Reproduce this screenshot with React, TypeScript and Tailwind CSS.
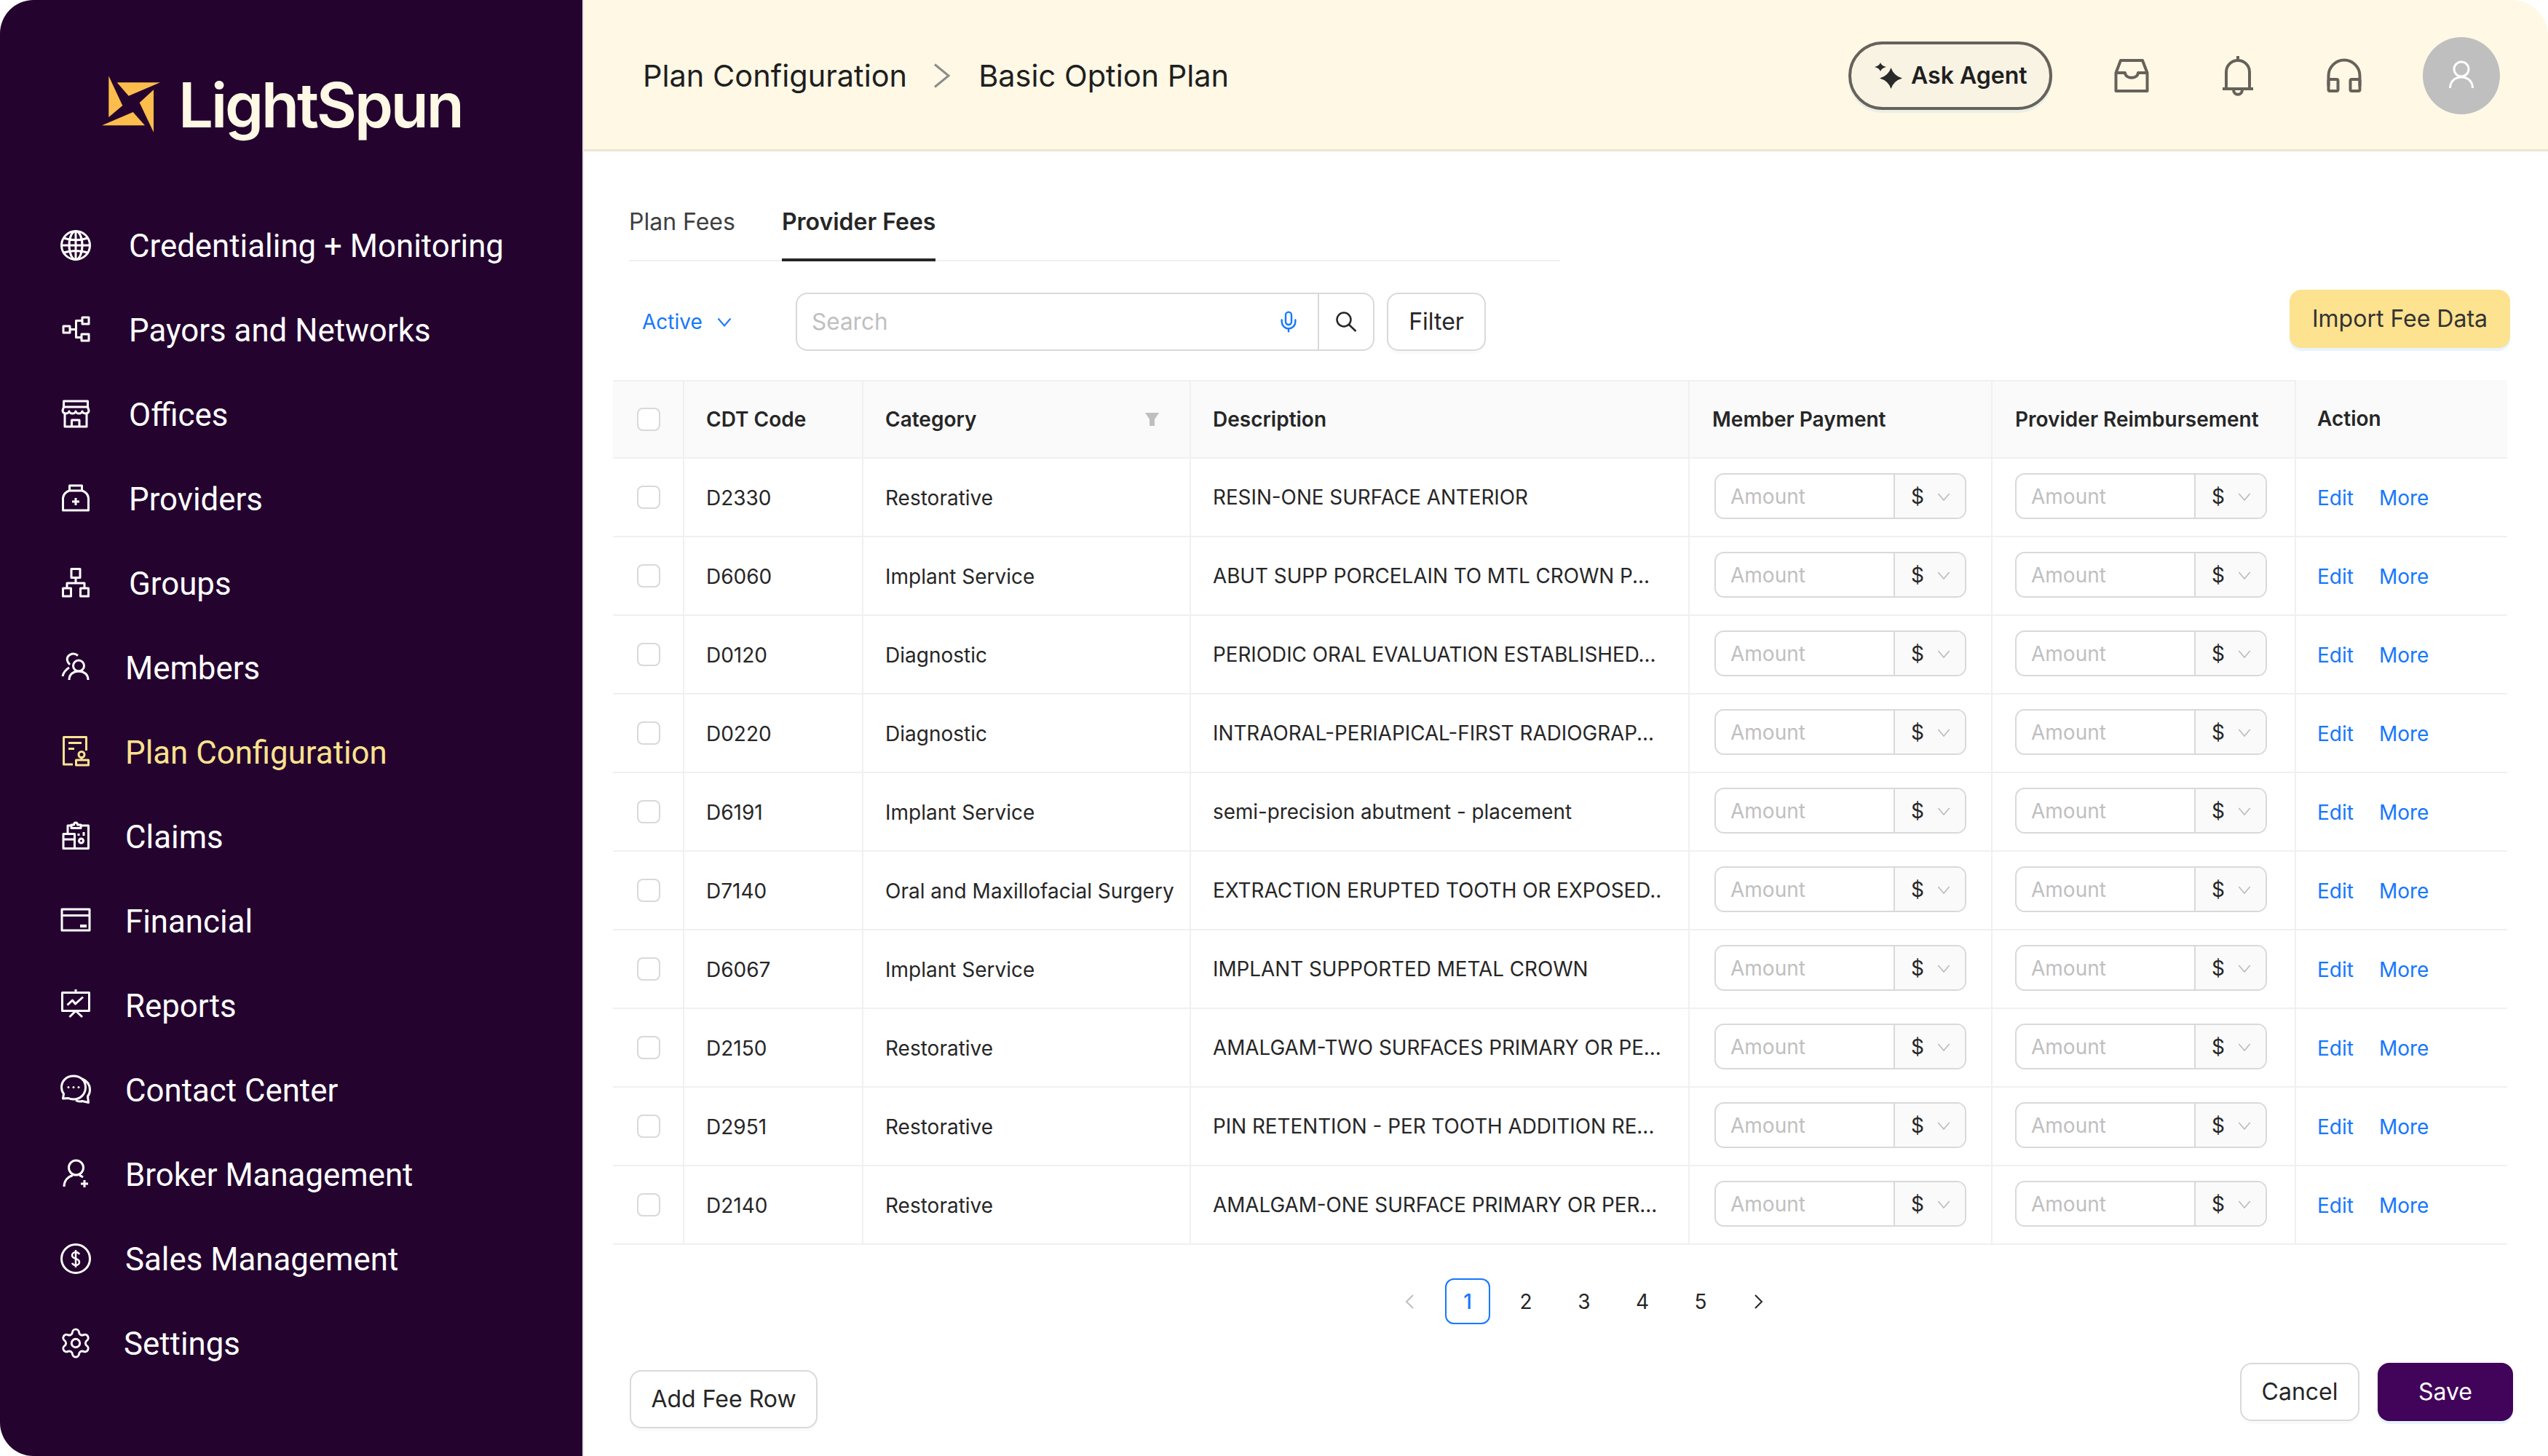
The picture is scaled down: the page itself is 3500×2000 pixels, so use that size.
import { Mic, Settings } from "lucide-react";
import type { ReactNode } from "react";

const rows = [
  ["D2330", "Restorative", "RESIN-ONE SURFACE ANTERIOR"],
  ["D6060", "Implant Service", "ABUT SUPP PORCELAIN TO MTL CROWN P..."],
  ["D0120", "Diagnostic", "PERIODIC ORAL EVALUATION ESTABLISHED..."],
  ["D0220", "Diagnostic", "INTRAORAL-PERIAPICAL-FIRST RADIOGRAP..."],
  ["D6191", "Implant Service", "semi-precision abutment - placement"],
  ["D7140", "Oral and Maxillofacial Surgery", "EXTRACTION ERUPTED TOOTH OR EXPOSED.."],
  ["D6067", "Implant Service", "IMPLANT SUPPORTED METAL CROWN"],
  ["D2150", "Restorative", "AMALGAM-TWO SURFACES PRIMARY OR PE..."],
  ["D2951", "Restorative", "PIN RETENTION - PER TOOTH ADDITION RE..."],
  ["D2140", "Restorative", "AMALGAM-ONE SURFACE PRIMARY OR PER..."],
];

function NavSvg({ children }: { children: ReactNode }) {
  return (
    <svg viewBox="0 0 48 48" className="h-12 w-12 shrink-0" fill="none" stroke="currentColor" strokeWidth="3" strokeLinejoin="round">
      {children}
    </svg>
  );
}

const nav = [
  {
    label: "Credentialing + Monitoring",
    gap: "ml-[49px]",
    icon: (
      <NavSvg>
        <circle cx="24" cy="24" r="19.5" />
        <ellipse cx="24" cy="24" rx="9" ry="19.5" />
        <path d="M24 4.5v39M4.5 24h39M7.5 14c10 3.5 23 3.5 33 0M7.5 34c10-3.5 23-3.5 33 0" />
      </NavSvg>
    ),
  },
  {
    label: "Payors and Networks",
    gap: "ml-[49px]",
    icon: (
      <NavSvg>
        <rect x="33" y="7" width="9" height="9" />
        <rect x="7" y="19" width="9" height="9" />
        <rect x="32" y="30" width="10" height="9" />
        <path d="M16 23.5h8M33 11.5h-8.500v23H32" />
      </NavSvg>
    ),
  },
  {
    label: "Offices",
    gap: "ml-[49px]",
    icon: (
      <NavSvg>
        <rect x="7.500" y="6" width="33" height="8" />
        <path d="M7.500 14 6 19c0 5 8 5 9 1 1 4 8 4 9 0 1 4 8 4 9 0 1 4 9 4 9-1l-1.500-5" />
        <path d="M9 24v17h30V24M18.500 41v-9h10.500v9" />
      </NavSvg>
    ),
  },
  {
    label: "Providers",
    gap: "ml-[49px]",
    icon: (
      <NavSvg>
        <path d="M15.500 13V6h17v7" />
        <path d="M15 13h18c5 2 8 6 8.500 10v17h-35V23c.5-4 3.500-8 8.500-10Z" />
        <path d="M24 23v10M19 28h10" />
      </NavSvg>
    ),
  },
  {
    label: "Groups",
    gap: "ml-[49px]",
    icon: (
      <NavSvg>
        <rect x="18" y="4.500" width="12" height="12" />
        <rect x="6.500" y="31" width="11" height="11" />
        <rect x="30.500" y="31" width="11" height="11" />
        <path d="M24 16.500V24M12 31v-7h24v7" />
      </NavSvg>
    ),
  },
  {
    label: "Members",
    gap: "ml-[44px]",
    icon: (
      <NavSvg>
        <circle cx="28" cy="21.500" r="7.500" />
        <path d="M15 41c0-8 6-12 13-12s13 4 13 12" />
        <path d="M27 7.500C20 2 11 7 12.500 14.500c.5 2.500 2 4 3.500 5.500M15 24c-5 3-8 7-9 12" />
      </NavSvg>
    ),
  },
  {
    label: "Plan Configuration",
    active: true,
    gap: "ml-[44px]",
    icon: (
      <NavSvg>
        <path d="M20 41H7.500V3.500h31V22" />
        <path d="M14 11.500h18M14 19.500h8" />
        <circle cx="32" cy="27.500" r="4" />
        <path d="M32 31.500V35" />
        <rect x="24.500" y="35" width="17" height="7" />
      </NavSvg>
    ),
  },
  {
    label: "Claims",
    gap: "ml-[44px]",
    icon: (
      <NavSvg>
        <path d="M13 20V9h5M30 9h11.500v31.500H23" />
        <path d="M18 12.500V8h3.500c0-4 5-4 5 0H31v4.500Z" />
        <rect x="7" y="20.500" width="15.500" height="20" />
        <path d="M7 28h15.500M28 20v3M35 18v5" />
        <circle cx="31.500" cy="30" r="3" />
      </NavSvg>
    ),
  },
  {
    label: "Financial",
    gap: "ml-[44px]",
    icon: (
      <NavSvg>
        <rect x="5" y="8" width="38" height="29" />
        <path d="M5 16.500h38" />
        <rect x="30" y="29" width="9" height="4" fill="currentColor" stroke="none" />
      </NavSvg>
    ),
  },
  {
    label: "Reports",
    gap: "ml-[44px]",
    icon: (
      <NavSvg>
        <rect x="5.500" y="6.500" width="37" height="25" />
        <path d="M24 2v4.500M12.500 23.500l7-6.500 4 5L34 12.500M24 31.500 15.500 40M24 31.500 33 40" />
      </NavSvg>
    ),
  },
  {
    label: "Contact Center",
    gap: "ml-[44px]",
    icon: (
      <NavSvg>
        <path d="M21 5C11 5 4.500 12 4.500 20.500c0 3.500 1 6.500 3 9L6.500 36l7.500-.5c2 1 4.500 1.500 7 1.500 10 0 16.500-7.500 16.500-16.500S31 5 21 5Z" />
        <path d="M33 9c7 3 10.500 9 10.500 15 0 3.500-1 6.500-3 9l1 8.500-8.500-2c-3 1-6 .500-9-1" />
        <circle cx="14" cy="20.500" r="1.500" fill="currentColor" stroke="none" />
        <circle cx="21" cy="20.500" r="1.500" fill="currentColor" stroke="none" />
        <circle cx="28" cy="20.500" r="1.500" fill="currentColor" stroke="none" />
      </NavSvg>
    ),
  },
  {
    label: "Broker Management",
    gap: "ml-[44px]",
    icon: (
      <NavSvg>
        <circle cx="24.500" cy="15" r="10" />
        <path d="M8 41c0-8 5-13.500 12-15.500M29 25.500c2 .5 3.500 1.500 5 2.500M36 32v10M31 37h10" />
      </NavSvg>
    ),
  },
  {
    label: "Sales Management",
    gap: "ml-[44px]",
    icon: (
      <NavSvg>
        <circle cx="24" cy="24" r="19.500" />
        <path d="M29 18c-1-2-3-3-5-3-3 0-5 2-5 4.500s2 3.500 5 4.500 5 2 5 4.500-2 4.500-5 4.500c-2 0-4-1-5-3M24 12v24" strokeWidth="2.500" />
      </NavSvg>
    ),
  },
  {
    label: "Settings",
    gap: "ml-[42px]",
    icon: (
      <div className="flex h-12 w-12 shrink-0 items-center justify-center">
        <Settings size={46} strokeWidth={1.5} />
      </div>
    ),
  },
];

function Sidebar() {
  return (
    <aside className="h-[2000px] w-[800px] shrink-0 rounded-l-[46px] bg-[#24042f] font-[Roboto,sans-serif] text-white">
      <div className="flex h-[279px] items-start pl-[130px] pt-[95px]">
        <svg viewBox="0 0 100 100" className="h-[100px] w-[100px] shrink-0" fill="#fdbd4c">
          <polygon points="19.300,9.300 38.300,50 19.300,66" />
          <polygon points="30.700,18.300 90,18.300 46.700,36.700" />
          <polygon points="81,28.300 81,86.700 61.700,46" />
          <polygon points="10,77.300 52.700,59 69,77.300" />
        </svg>
        <span className="ml-[15px] font-[Inter,sans-serif] text-[85px] leading-[100px] font-semibold tracking-[-0.037em] text-[#fef8e5]">LightSpun</span>
      </div>
      {nav.map((item) => (
        <div key={item.label} className={`flex h-[116px] items-center pl-[80px] ${item.active ? "text-[#fde28f]" : ""}`}>
          {item.icon}
          <span className={`${item.gap} pt-[3px] text-[43.800px]`}>{item.label}</span>
        </div>
      ))}
    </aside>
  );
}

function TopBar() {
  return (
    <header className="flex h-[208px] items-center rounded-tr-[50px] border-b-[3px] border-[#ebe5d5] bg-[#fef8e5] pt-[3px] pr-[66px] pl-[81px] text-[#66625a]">
      <span className="text-[41.500px] text-[#1f1f1f]">Plan Configuration</span>
      <svg viewBox="0 0 24 34" className="mr-[38px] ml-[36px] h-[34px] w-[24px]" fill="none" stroke="#8c8c8c" strokeWidth="3">
        <path d="M2 1.500 21 17 2 32.500" />
      </svg>
      <span className="text-[41.500px] text-[#1f1f1f]">Basic Option Plan</span>

      <button className="ml-auto flex h-[94px] w-[280px] items-center rounded-full border-4 border-[#66625a] bg-[#f8f3e3] pl-[32px] shadow-[0_4px_0_rgba(5,145,255,0.08)]">
        <svg viewBox="0 0 38 36" className="h-[36px] w-[38px]" fill="#2a2a2a">
          <path d="M22.500 7Q26 18 38 21.500 26 25 22.500 36 19 25 7 21.500 19 18 22.500 7Z" />
          <path d="M8 0Q9.500 4.500 16 6 9.500 7.500 8 12 6.500 7.500 0 6 6.500 4.500 8 0Z" />
        </svg>
        <span className="ml-[12px] text-[32px] font-semibold text-[#1f1f1f]">Ask Agent</span>
      </button>

      <svg viewBox="0 0 48 48" className="ml-[85px] h-12 w-12" fill="none" stroke="currentColor" strokeWidth="4" strokeLinejoin="round">
        <path d="M9 3h30l6.500 17v25h-43V20Z" />
        <path d="M2.500 20H15c1 9 17 9 18 0h12.500" />
      </svg>
      <svg viewBox="0 0 42 55" className="ml-[101px] h-[55px] w-[42px]" fill="none" stroke="currentColor" strokeWidth="4">
        <path d="M21 0v6M5 45V22c0-9 7-16 16-16s16 7 16 16v23M0 45h42" />
        <path d="M15 46c0 9 12 9 12 0" />
      </svg>
      <svg viewBox="0 0 48 48" className="ml-[101px] h-12 w-12" fill="none" stroke="currentColor" strokeWidth="4" strokeLinejoin="round">
        <path d="M2.500 38V24a21.500 21.500 0 0 1 43 0v14" />
        <rect x="2.500" y="29" width="13" height="16" rx="2" />
        <rect x="32.500" y="29" width="13" height="16" rx="2" />
      </svg>
      <div className="ml-[84px] flex h-[106px] w-[106px] items-center justify-center rounded-full bg-[#bfbfbf]">
        <svg viewBox="0 0 48 48" className="h-12 w-12" fill="none" stroke="white" strokeWidth="3">
          <circle cx="24" cy="15" r="10" />
          <path d="M8.500 41c0-9 6.500-15 15.500-15s15.500 6 15.500 15" />
        </svg>
      </div>
    </header>
  );
}

function Chevron({ className, stroke }: { className: string; stroke: string }) {
  return (
    <svg viewBox="0 0 20 12" className={className} fill="none" stroke={stroke} strokeWidth="2">
      <path d="M1.500 1 10 11l8.500-10" />
    </svg>
  );
}

function AmountField() {
  return (
    <div className="mb-[4px] flex h-[63px] w-[346px] overflow-hidden rounded-[13px] border-2 border-[#d9d9d9] text-[28px]">
      <div className="flex w-[246px] items-center border-r-2 border-[#d9d9d9] pt-[2px] pl-[20px] text-[#bfbfbf]">Amount</div>
      <div className="flex flex-1 items-center bg-[#fafafa] pt-[2px] pl-[22px] text-[#262626]">
        $
        <Chevron className="ml-[18px] h-[11px] w-[18px]" stroke="#bfbfbf" />
      </div>
    </div>
  );
}

const gridCols = "grid grid-cols-[98px_246px_450px_685px_416px_417px_290px]";
const cell = "flex items-center border-r-2 border-[#f0f0f0]";

function Checkbox() {
  return <div className="h-8 w-8 rounded-[8px] border-2 border-[#d9d9d9] bg-white" />;
}

function FeeTable() {
  return (
    <div className="ml-[40px] w-[2602px] text-[28px]">
      <div className={`${gridCols} h-[108px] border-b-2 border-[#f0f0f0] bg-[#fafafa] font-semibold text-[#262626]`}>
        <div className={`${cell} border-t-2 pl-[33px]`}><Checkbox /></div>
        <div className={`${cell} border-t-2 pl-[30px]`}>CDT Code</div>
        <div className={`${cell} justify-between border-t-2 pr-[42px] pl-[30px]`}>
          Category
          <svg viewBox="0 0 19 18" className="h-[18px] w-[19px]" fill="#bfbfbf">
            <path d="M0 0h19l-6 9v9H6V9Z" />
          </svg>
        </div>
        <div className={`${cell} border-t-2 pl-[30px]`}>Description</div>
        <div className={`${cell} border-t-2 pl-[31px]`}>Member Payment</div>
        <div className={`${cell} border-t-2 pl-[31px]`}>Provider Reimbursement</div>
        <div className="flex items-center pl-[29px]">Action</div>
      </div>
      {rows.map(([code, category, description]) => (
        <div key={code} className={`${gridCols} h-[108px] border-b-2 border-[#f0f0f0] text-[#262626]`}>
          <div className={`${cell} pl-[33px]`}><Checkbox /></div>
          <div className={`${cell} pt-[2px] pl-[30px]`}>{code}</div>
          <div className={`${cell} pt-[2px] pl-[30px] whitespace-nowrap`}>{category}</div>
          <div className={`${cell} pt-[2px] pl-[30px] text-[27.800px] whitespace-nowrap`}>{description}</div>
          <div className={`${cell} pl-[34px]`}><AmountField /></div>
          <div className={`${cell} pl-[31px]`}><AmountField /></div>
          <div className="flex items-center gap-[35px] pt-[2px] pl-[29px] text-[#1677ff]">
            <span>Edit</span>
            <span>More</span>
          </div>
        </div>
      ))}
    </div>
  );
}

function Pagination() {
  return (
    <div className="mt-[46px] ml-[1103px] flex gap-[18px] text-[28px]">
      <div className="flex h-[63px] w-[62px] items-center justify-center">
        <svg viewBox="0 0 12 20" className="h-[20px] w-[12px]" fill="none" stroke="#bfbfbf" strokeWidth="2"><path d="M11 1 2 10l9 9" /></svg>
      </div>
      {[1, 2, 3, 4, 5].map((p) => (
        <div key={p} className={`flex h-[63px] w-[62px] items-center justify-center rounded-[12px] ${p === 1 ? "border-2 border-[#1677ff] font-medium text-[#1677ff]" : "text-[#262626]"}`}>
          {p}
        </div>
      ))}
      <div className="flex h-[63px] w-[62px] items-center justify-center">
        <svg viewBox="0 0 12 20" className="h-[20px] w-[12px]" fill="none" stroke="#262626" strokeWidth="2"><path d="m1 1 9 9-9 9" /></svg>
      </div>
    </div>
  );
}

export default function App() {
  return (
    <div className="flex h-[2000px] w-[3500px] overflow-hidden bg-white font-[Inter,sans-serif]">
      <Sidebar />
      <main className="h-[2000px] flex-1 border-l-2 border-black/10">
        <TopBar />

        <div className="ml-[62px] flex h-[151px] w-[1279px] items-end gap-[64px] border-b-2 border-[#f0f0f0] text-[32px]">
          <div className="flex h-[104px] items-center text-[#404040]">Plan Fees</div>
          <div className="-mb-[2px] flex h-[104px] items-center border-b-4 border-[#262626] font-semibold text-[#262626]">Provider Fees</div>
        </div>

        <div className="mt-[39px] mr-[52px] mb-[40px] ml-[80px] flex h-[84px] items-start">
          <div className="mt-[4px] flex h-[80px] w-[211px] items-center text-[28px] text-[#1677ff]">
            Active
            <Chevron className="ml-[20px] h-[13px] w-[20px]" stroke="#1677ff" />
          </div>
          <div className="mt-[4px] flex h-[80px] w-[795px] rounded-[16px] border-2 border-[#d9d9d9] text-[31.500px]">
            <div className="flex flex-1 items-center justify-between pr-[24px] pl-[20px] text-[#bfbfbf]">
              Search
              <Mic size={32} strokeWidth={1.8} color="#1677ff" />
            </div>
            <div className="flex w-[76px] items-center justify-center border-l-2 border-[#d9d9d9]">
              <svg viewBox="0 0 30 28" className="h-[28px] w-[30px]" fill="none" stroke="#262626" strokeWidth="2.500">
                <circle cx="12" cy="11" r="9.500" />
                <path d="M19 18l9.500 9" />
              </svg>
            </div>
          </div>
          <div className="mt-[4px] ml-[17px] flex h-[80px] w-[136px] items-center justify-center rounded-[16px] border-2 border-[#d9d9d9] text-[32px] text-[#262626] shadow-[0_4px_0_rgba(0,0,0,0.02)]">Filter</div>
          <div className="ml-auto flex h-[80px] w-[303px] items-center justify-center rounded-[16px] bg-[#fde28f] text-[32px] text-[#333] shadow-[0_4px_0_rgba(5,145,255,0.1)]">Import Fee Data</div>
        </div>

        <FeeTable />
        <Pagination />

        <div className="mt-[53px] mr-[48px] ml-[63px] flex items-start justify-between text-[32px] text-[#262626]">
          <div className="mt-[10px] flex h-[80px] w-[258px] items-center justify-center rounded-[16px] border-2 border-[#d9d9d9] shadow-[0_4px_0_rgba(0,0,0,0.02)]">Add Fee Row</div>
          <div className="flex gap-[25px]">
            <div className="flex h-[80px] w-[164px] items-center justify-center rounded-[16px] border-2 border-[#d9d9d9] shadow-[0_4px_0_rgba(0,0,0,0.02)]">Cancel</div>
            <div className="flex h-[80px] w-[186px] items-center justify-center rounded-[16px] bg-[#42035a] text-white shadow-[0_4px_0_rgba(5,145,255,0.1)]">Save</div>
          </div>
        </div>
      </main>
    </div>
  );
}
